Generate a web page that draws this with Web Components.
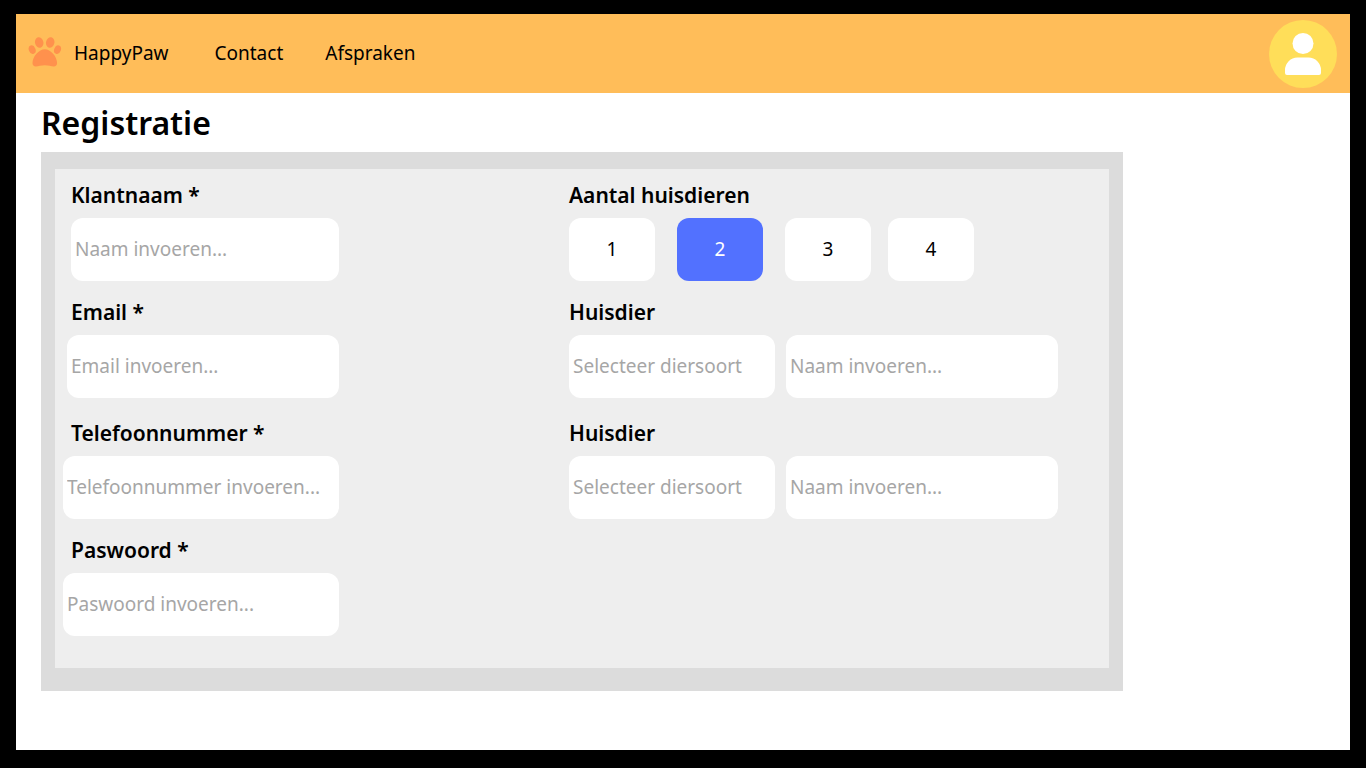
<!DOCTYPE html>
<html lang="nl">
<head>
<meta charset="utf-8">
<meta name="viewport" content="width=device-width, initial-scale=1">
<title>HappyPaw - Registratie</title>
<style>
  body { margin: 0; background: #000; color: #000; font: 19px/28px "Noto Sans", sans-serif; }
</style>
</head>
<body>
<happy-app></happy-app>
<script>
const define = (name, html, setup) => {
  const template = document.createElement('template');
  template.innerHTML = '<style>*{box-sizing:border-box}</style>' + html;
  customElements.define(name, class extends HTMLElement {
    constructor() {
      super();
      this.attachShadow({ mode: 'open' }).append(template.content.cloneNode(true));
    }
    connectedCallback() { if (setup) setup(this, this.shadowRoot); }
  });
};

const controlStyle = `
  input, select, button {
    display: block; height: 63px; margin: 0; padding: 0 4px 1px; border: 0; border-radius: 12px;
    background: #fff; color: #000; font: inherit; appearance: none;
  }
  input::placeholder { color: #a6a6a6; opacity: 1; }
  label, .label { display: block; font-size: 21px; font-weight: 600; line-height: 26px; }`;

define('paw-logo', `
  <style>:host{display:block} svg{display:block;width:34px;height:30px;fill:#ff914d}</style>
  <svg viewBox="0 0 34 30" aria-hidden="true">
    <ellipse cx="11.2" cy="5.500" rx="4.200" ry="5.400" transform="rotate(-12 11.2 5.500)"/>
    <ellipse cx="22.2" cy="5.500" rx="4.200" ry="5.400" transform="rotate(12 22.2 5.500)"/>
    <ellipse cx="4.2" cy="12.7" rx="3.300" ry="4.4" transform="rotate(-22 4.2 12.7)"/>
    <ellipse cx="29.5" cy="12.7" rx="3.300" ry="4.4" transform="rotate(22 29.5 12.7)"/>
    <path d="M16.8 12.3c-5.8 0-12.3 7.2-12.3 14 0 2 1.3 3.2 3.3 3.2 2.7 0 5.500-1.200 9-1.200s6.300 1.200 9 1.200c2 0 3.300-1.200 3.300-3.200 0-6.800-6.500-14-12.300-14z"/>
  </svg>`);

define('user-avatar', `
  <style>
    :host{display:block}
    button{display:block;width:68px;height:68px;padding:0;border:0;border-radius:50%;background:#ffde59}
    svg{display:block;width:68px;height:68px;fill:#fff}
  </style>
  <button type="button" aria-label="Profiel">
    <svg viewBox="0 0 68 68" aria-hidden="true">
      <circle cx="34" cy="23.500" r="10.500"/>
      <path d="M28.500 37.500h11a12.500 12.500 0 0 1 12.500 12.500v3a2 2 0 0 1-2 2H18a2 2 0 0 1-2-2v-3a12.500 12.500 0 0 1 12.500-12.500z"/>
    </svg>
  </button>`);

define('app-header', `
  <style>
    :host{display:flex;align-items:center;justify-content:space-between;height:79px;padding:0 13px 0 12px;background:#ffbd59}
    nav,.brand{display:flex;align-items:center}
    nav{gap:42px;padding-bottom:2px}
    .brand{gap:12px;margin-right:4px}
    paw-logo{padding-bottom:2px}
    a{color:inherit;text-decoration:none}
  </style>
  <nav>
    <a class="brand" href="#home"><paw-logo></paw-logo>HappyPaw</a>
    <a href="#contact">Contact</a>
    <a href="#afspraken">Afspraken</a>
  </nav>
  <user-avatar></user-avatar>`);

define('text-field', `
  <style>${controlStyle}
    :host{display:flex;flex-direction:column;gap:10px}
    label{padding-left:8px}
    input{align-self:flex-end;width:100%}
    :host([size=small]) input{width:268px}
    :host([size=medium]) input{width:272px}
  </style>
  <label for="control"></label>
  <input id="control">`, (host, root) => {
    const input = root.querySelector('input');
    root.querySelector('label').textContent = host.getAttribute('label');
    input.placeholder = host.getAttribute('placeholder');
    input.type = host.getAttribute('type') || 'text';
    input.required = true;
  });

define('pet-count', `
  <style>${controlStyle}
    :host{display:flex;flex-direction:column;gap:10px}
    .choices{display:grid;grid-template-columns:108px 108px 103px 86px}
    button{width:86px;text-align:center}
    button[aria-pressed=true]{background:#5271ff;color:#fff}
  </style>
  <div class="label" id="title">Aantal huisdieren</div>
  <div class="choices" role="group" aria-labelledby="title">
    <button type="button" aria-pressed="false">1</button>
    <button type="button" aria-pressed="true">2</button>
    <button type="button" aria-pressed="false">3</button>
    <button type="button" aria-pressed="false">4</button>
  </div>`, (host, root) => {
    const buttons = root.querySelectorAll('button');
    buttons.forEach(b => b.onclick = () =>
      buttons.forEach(o => o.setAttribute('aria-pressed', String(o === b))));
  });

define('pet-field', `
  <style>${controlStyle}
    :host{display:flex;flex-direction:column;gap:10px}
    .row{display:grid;grid-template-columns:206px 1fr;gap:11px}
    select{width:100%;color:#a6a6a6}
    input{width:100%}
  </style>
  <label for="kind">Huisdier</label>
  <div class="row">
    <select id="kind"><option>Selecteer diersoort</option><option>Hond</option><option>Kat</option></select>
    <input type="text" aria-label="Naam huisdier" placeholder="Naam invoeren...">
  </div>`);

define('form-group', `
  <style>:host{display:flex;flex-direction:column;gap:18px}</style>
  <slot></slot>`);

define('registration-form', `
  <style>
    :host{display:block;max-width:1082px;border:solid #dcdcdc;border-width:17px 14px 23px;background:#eee}
    form{display:grid;grid-template-columns:1fr 489px;gap:22px 0;padding:13px 51px 32px 8px}
    .client{width:276px}
  </style>
  <form>
    <form-group class="client">
      <text-field size="small" label="Klantnaam *" placeholder="Naam invoeren..."></text-field>
      <text-field size="medium" label="Email *" type="email" placeholder="Email invoeren..."></text-field>
    </form-group>
    <form-group>
      <pet-count></pet-count>
      <pet-field></pet-field>
    </form-group>
    <form-group class="client">
      <text-field label="Telefoonnummer *" type="tel" placeholder="Telefoonnummer invoeren..."></text-field>
      <text-field label="Paswoord *" type="password" placeholder="Paswoord invoeren..."></text-field>
    </form-group>
    <form-group>
      <pet-field></pet-field>
    </form-group>
  </form>`);

define('happy-app', `
  <style>
    :host{display:flex;flex-direction:column;min-height:100vh;border:solid #000;border-width:14px 16px 18px;background:#fff;box-sizing:border-box}
    main{padding:8px 25px}
    h1{margin:0 0 7px;font-size:32px;font-weight:600;line-height:44px}
  </style>
  <app-header></app-header>
  <main>
    <h1>Registratie</h1>
    <registration-form></registration-form>
  </main>`);
</script>
</body>
</html>
